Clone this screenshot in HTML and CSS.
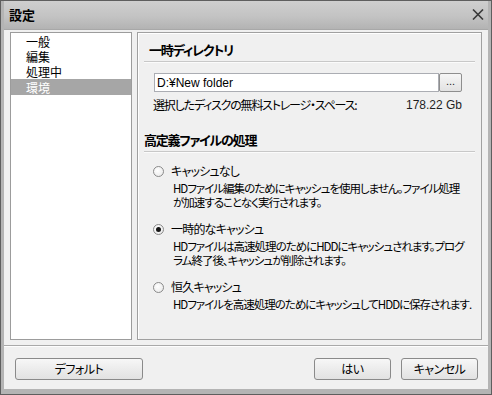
FILE: index.html
```html
<!DOCTYPE html>
<html lang="ja">
  <head>
    <meta charset="UTF-8">
    <title>設定</title>
    <link rel="stylesheet" href="styles.css">
  </head>
  <body>
    <div class="window">
      <div class="titlebar">
        <span class="title">設定</span>
        <svg class="close" width="12" height="11" viewBox="0 0 12 11">
          <path d="M1 0.5 L11 10.5 M11 0.5 L1 10.5" stroke="#3a3a3a" stroke-width="1.6" fill="none"/>
        </svg>
      </div>
      <div class="client">
        <div class="main">
          <ul class="nav">
            <li>一般</li>
            <li>編集</li>
            <li>処理中</li>
            <li class="selected">環境</li>
          </ul>
          <div class="panel">
            <h2 class="section first">一時ディレクトリ</h2>
            <div class="rule"></div>
            <div class="path-row">
              <input type="text" class="path" value="D:¥New folder" readonly>
              <button class="browse">...</button>
            </div>
            <div class="space-row">
              <span class="space-label">選択したディスクの無料ストレージ・スペース:</span>
              <span class="size">178.22 Gb</span>
            </div>
            <h2 class="section">高定義ファイルの処理</h2>
            <div class="rule"></div>

            <div class="option">
              <div class="option-head"><span class="radio"></span>キャッシュなし</div>
              <p class="desc">HDファイル編集のためにキャッシュを使用しません。ファイル処理<br>が加速することなく実行されます。</p>
            </div>
            <div class="option">
              <div class="option-head"><span class="radio checked"></span>一時的なキャッシュ</div>
              <p class="desc">HDファイルは高速処理のためにHDDにキャッシュされます。プログ<br>ラム終了後、キャッシュが削除されます。</p>
            </div>
            <div class="option">
              <div class="option-head"><span class="radio"></span>恒久キャッシュ</div>
              <p class="desc">HDファイルを高速処理のためにキャッシュしてHDDに保存されます.</p>
            </div>
          </div>
        </div>
        <div class="footer-rule"></div>
        <div class="buttons">
          <button class="btn wide">デフォルト</button>
          <div class="spacer"></div>
          <button class="btn">はい</button>
          <button class="btn">キャンセル</button>
        </div>
      </div>
    </div>
  </body>
</html>
```

FILE: styles.css
```css
      html, body {
          margin: 0;
          padding: 0;
          background: #ffffff;
      }
      body {
          font-family: "Noto Sans CJK JP", "Liberation Sans", sans-serif;
          font-size: 12px;
          color: #000;
          font-feature-settings: "palt";
      }
      .window {
          width: 492px;
          height: 395px;
          box-sizing: border-box;
          border: 1px solid #5e5e5e;
          background: #b4b4b4;
          padding: 0 3px 5px 3px;
          display: flex;
          flex-direction: column;
      }
      .titlebar {
          height: 28px;
          flex: none;
          display: flex;
          align-items: center;
          justify-content: space-between;
          padding: 0 4px 0 5px;
          background: linear-gradient(#cfcfcf, #c3c3c3 55%, #b3b3b3);
      }
      .title {
          font-weight: bold;
          font-size: 13px;
          line-height: 14px;
          margin-top: -1px;
      }
      .close {
          display: block;
          margin-top: -2px;
      }
      .client {
          flex: 1;
          background: #f0f0f0;
          border-top: 1px solid #a8a8a8;
          display: flex;
          flex-direction: column;
          padding-top: 2px;
      }
      .main {
          display: flex;
          gap: 5px;
          padding: 0 6px;
          height: 308px;
      }
      .nav {
          flex: none;
          list-style: none;
          margin: 0;
          padding: 1px 0 0 0;
          width: 122px;
          box-sizing: border-box;
          background: #fff;
          border: 1px solid #9c9c9c;
      }
      .nav li {
          height: 15px;
          line-height: 15px;
          padding-left: 15px;
          font-feature-settings: normal;
      }
      .nav li.selected {
          background: #a6a6a6;
          color: #fff;
          height: 16px;
          line-height: 17px;
      }
      .panel {
          flex: 1;
          min-width: 0;
          box-sizing: border-box;
          border: 1px solid #a0a0a0;
          box-shadow: inset 1px 1px 0 #ffffff;
          padding: 0 6px;
      }
      .section {
          margin: 0;
          font-size: 13px;
          font-weight: bold;
          letter-spacing: -1.2px;
          line-height: 16px;
          height: 16px;
          padding-top: 20px;
      }
      .section.first {
          padding-top: 9px;
          padding-left: 5px;
      }
      .rule {
          height: 1px;
          margin-top: 3px;
          background: #c8c8c8;
          border-bottom: 1px solid #fbfbfb;
      }
      .path-row {
          display: flex;
          margin: 10px 13px 0 10px;
          height: 19px;
      }
      .path {
          flex: 1;
          min-width: 0;
          margin: 0;
          height: 19px;
          box-sizing: border-box;
          border: 1px solid #abadb3;
          padding: 0 2px;
          font-family: "Liberation Sans", sans-serif;
          font-size: 12px;
          color: #000;
          background: #fff;
          outline: none;
      }
      .browse {
          width: 23px;
          height: 19px;
          margin: 0;
          padding: 0 0 3px 0;
          box-sizing: border-box;
          border: 1px solid #8e8e8e;
          border-radius: 2px;
          background: linear-gradient(#f6f6f6, #e2e2e2);
          font-family: "Liberation Sans", sans-serif;
          font-size: 11px;
          color: #222;
          line-height: 10px;
      }
      .space-row {
          display: flex;
          justify-content: space-between;
          margin: 6px 13px 0 9px;
          line-height: 14px;
      }
      .space-label {
          letter-spacing: -1.2px;
      }
      .size {
          font-family: "Liberation Sans", sans-serif;
          font-size: 12px;
          color: #1e1e1e;
      }
      .option {
          margin-left: 9px;
          margin-top: 11px;
      }
      .option + .option {
          margin-top: 13px;
      }
      .option-head {
          display: flex;
          align-items: center;
          line-height: 14px;
          height: 14px;
          letter-spacing: -0.8px;
      }
      .radio {
          width: 11px;
          height: 11px;
          box-sizing: border-box;
          border: 1px solid #8a8a8a;
          border-radius: 50%;
          background: radial-gradient(circle at 40% 40%, #ffffff, #e6e6e6);
          margin-right: 7px;
          display: flex;
          align-items: center;
          justify-content: center;
      }
      .radio.checked::after {
          content: "";
          width: 5px;
          height: 5px;
          border-radius: 50%;
          background: #151515;
      }
      .desc {
          margin: 4px 0 0 20px;
          line-height: 13.5px;
          font-size: 11.5px;
          letter-spacing: -1px;
          white-space: nowrap;
      }
      .footer-rule {
          height: 1px;
          margin-top: 5px;
          background: #a9a9a9;
          border-bottom: 1px solid #fdfdfd;
      }
      .buttons {
          display: flex;
          gap: 10px;
          padding: 11px 10px 0 11px;
      }
      .spacer {
          flex: 1;
      }
      .btn {
          width: 77px;
          height: 22px;
          margin: 0;
          padding: 0;
          box-sizing: border-box;
          border: 1px solid #8a8a8a;
          border-radius: 3px;
          background: linear-gradient(#f7f7f7, #ececec 50%, #e2e2e2);
          font-family: "Noto Sans CJK JP", sans-serif;
          font-size: 12px;
          font-feature-settings: "palt";
          letter-spacing: -0.5px;
          color: #000;
          line-height: 18px;
      }
      .btn.wide {
          width: 128px;
      }
```
